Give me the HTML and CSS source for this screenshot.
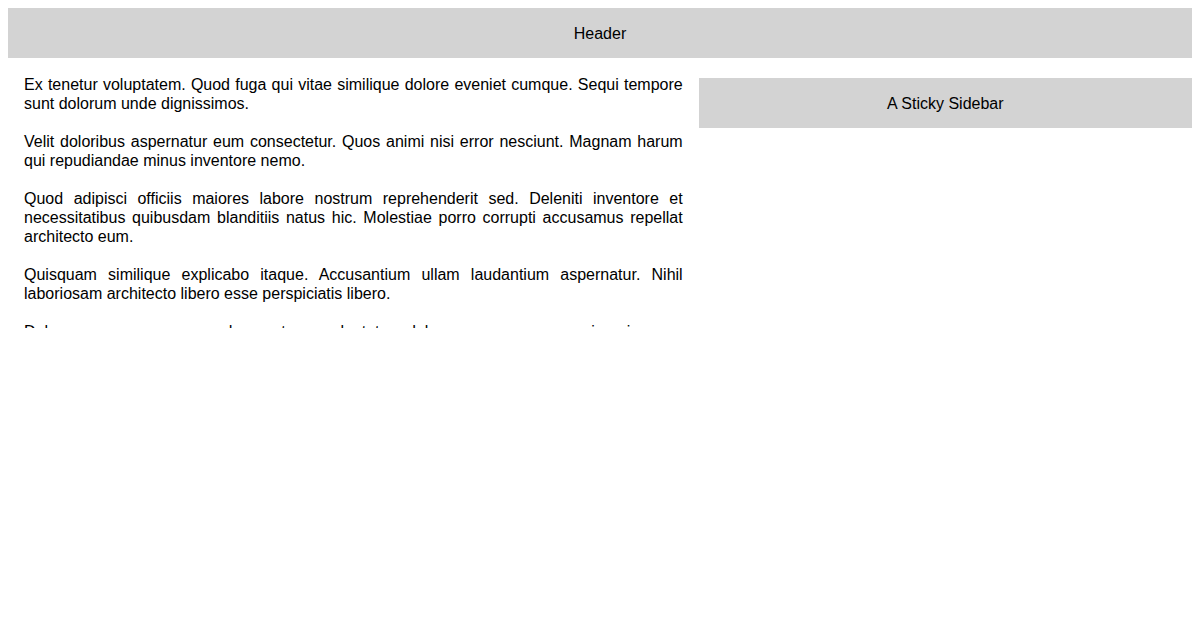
FILE: index.html
```html
<!DOCTYPE html>
<html>
<head>
<meta charset="utf-8">
<link rel="stylesheet" href="styles.css">
</head>
<body>
<div class="page">
  <header class="header">Header</header>
  <main class="main">
    <section class="content">
      <p>Ex tenetur voluptatem. Quod fuga qui vitae similique dolore eveniet cumque. Sequi tempore sunt dolorum unde dignissimos.</p>
      <p>Velit doloribus aspernatur eum consectetur. Quos animi nisi error nesciunt. Magnam harum qui repudiandae minus inventore nemo.</p>
      <p>Quod adipisci officiis maiores labore nostrum reprehenderit sed. Deleniti inventore et necessitatibus quibusdam blanditiis natus hic. Molestiae porro corrupti accusamus repellat architecto eum.</p>
      <p>Quisquam similique explicabo itaque. Accusantium ullam laudantium aspernatur. Nihil laboriosam architecto libero esse perspiciatis libero.</p>
      <p>Doloremque quas magnam deserunt rem voluptatum dolores ea accusamus quia quisquam. Quas sapiente nobis ipsam aliquid eligendi officia ducimus.</p>
      <p>Nemo ratione cumque sit laboriosam voluptas. Provident voluptas nihil quaerat dignissimos totam sed.</p>
    </section>
    <aside class="sidebar">A Sticky Sidebar</aside>
  </main>
</div>
</body>
</html>
```
FILE: styles.css
```css
body {
  margin: 8px;
  font-family: "Liberation Sans", Arial, sans-serif;
  font-size: 16px;
  color: #000;
  background: #fff;
}
.page {
  display: flex;
  flex-direction: column;
}
.header {
  height: 49px;
  padding-top: 1px;
  line-height: 50px;
  text-align: center;
  background: #d3d3d3;
}
.main {
  height: 270px;
  overflow: hidden;
  display: grid;
  grid-template-columns: 7fr 5fr;
  align-items: start;
}
.content {
  padding: 17px 16px 0;
  text-align: justify;
  line-height: 19px;
}
.content p {
  margin: 0 0 19px;
}
.sidebar {
  margin-top: 20px;
  height: 49px;
  padding-top: 1px;
  line-height: 50px;
  text-align: center;
  background: #d3d3d3;
}
```
